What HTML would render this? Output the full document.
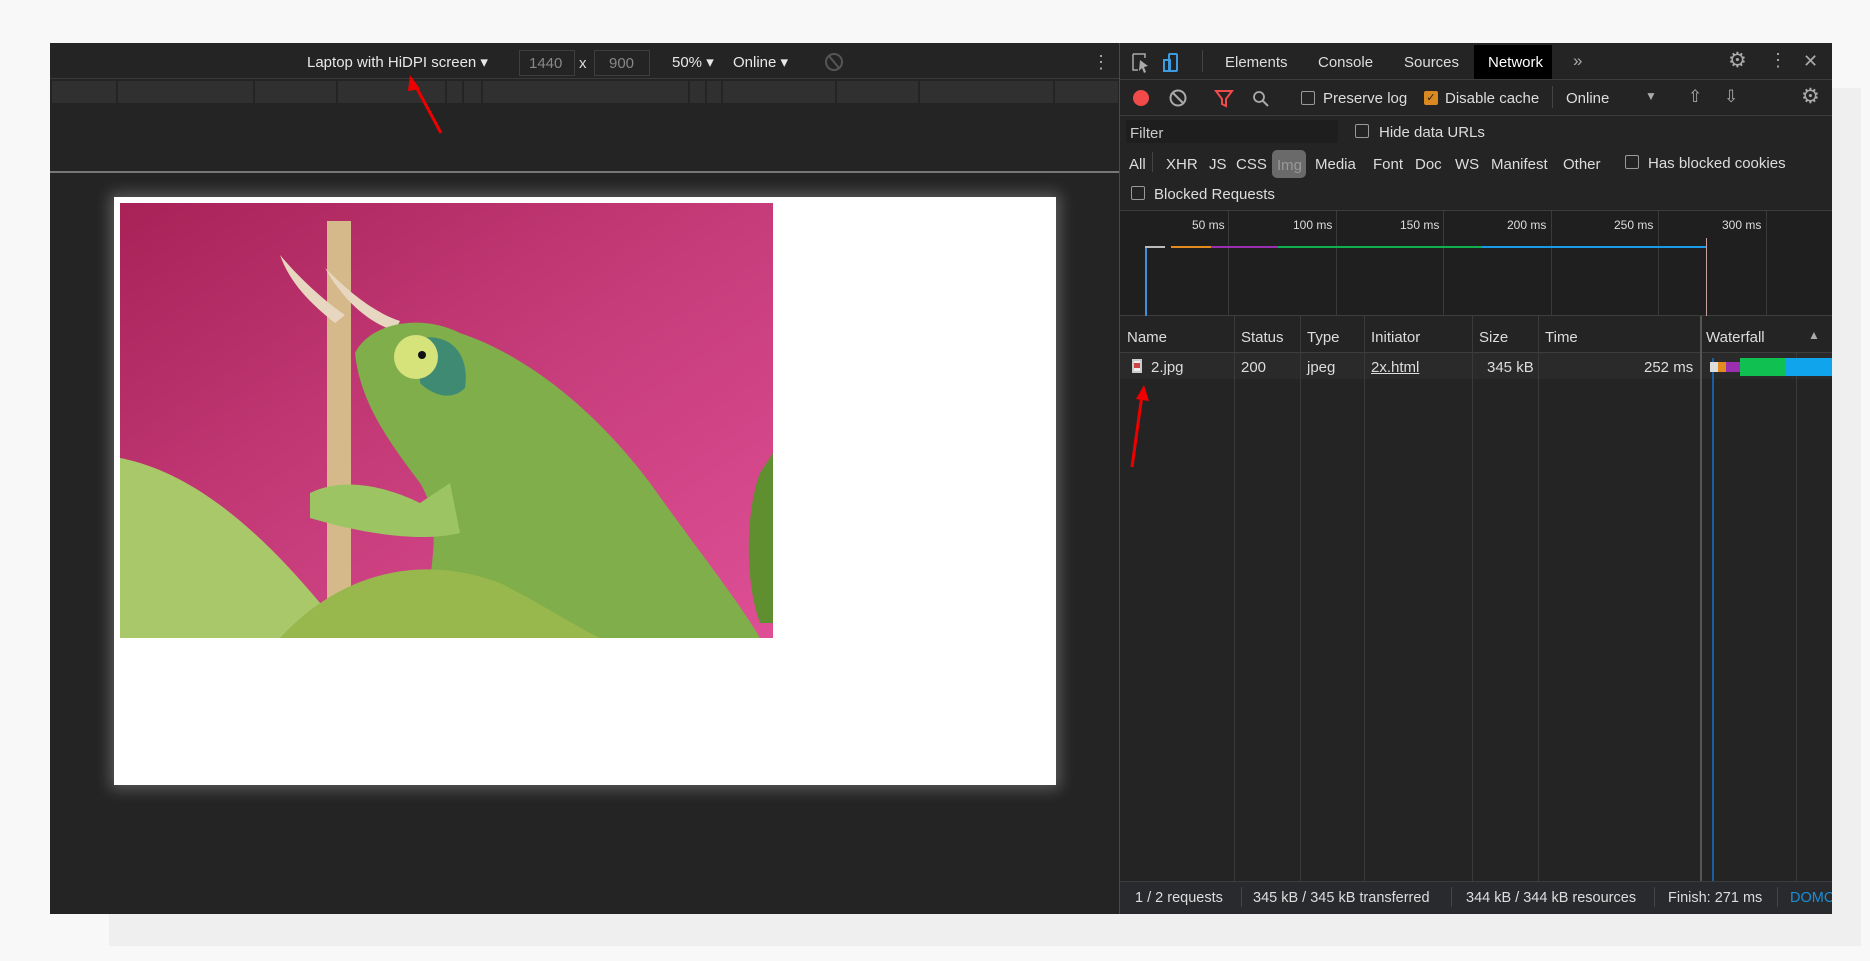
<!DOCTYPE html>
<html><head><meta charset="utf-8"><style>
*{margin:0;padding:0;box-sizing:border-box}
body{width:1870px;height:961px;background:#f8f8f8;position:relative;overflow:hidden;font-family:"Liberation Sans",sans-serif;font-size:15px;color:#ddd}
.a{position:absolute}
.t{position:absolute;white-space:nowrap;line-height:1}
.cb{position:absolute;width:14px;height:14px;border:1px solid #999;border-radius:2px}
.vl{position:absolute;width:1px;background:#3a3a3a}
</style></head><body>
<div class="a" style="left:109px;top:914px;width:1752px;height:32px;background:#efefef"></div>
<div class="a" style="left:1832px;top:88px;width:29px;height:826px;background:#efefef"></div>
<div class="a" style="left:50px;top:43px;width:1782px;height:871px;background:#242424"></div>
<!-- left device toolbar -->
<div class="a" style="left:50px;top:43px;width:1070px;height:36px;background:#242424;border-bottom:1px solid #3a3a3a"></div>
<div class="t" style="left:307px;top:55px;color:#e8e8e8">Laptop with HiDPI screen ▾</div>
<div class="a" style="left:519px;top:50px;width:56px;height:26px;border:1px solid #3e3e3e"></div>
<div class="t" style="left:529px;top:56px;color:#888">1440</div>
<div class="t" style="left:579px;top:56px;color:#ddd">x</div>
<div class="a" style="left:594px;top:50px;width:56px;height:26px;border:1px solid #3e3e3e"></div>
<div class="t" style="left:609px;top:56px;color:#888">900</div>
<div class="t" style="left:672px;top:55px;color:#e8e8e8">50% ▾</div>
<div class="t" style="left:733px;top:55px;color:#e8e8e8">Online ▾</div>
<svg class="a" style="left:824px;top:52px" width="20" height="20"><circle cx="10" cy="10" r="8" stroke="#555" stroke-width="2" fill="none"/><path d="M5 4 L15 16" stroke="#555" stroke-width="2"/></svg>
<div class="t" style="left:1092px;top:53px;color:#aaa;font-size:18px">⋮</div>
<div class="a" style="left:52px;top:81px;width:1066px;height:22px;background:#303030"></div>
<div class="a" style="left:116px;top:81px;width:2px;height:22px;background:#242424"></div>
<div class="a" style="left:253px;top:81px;width:2px;height:22px;background:#242424"></div>
<div class="a" style="left:336px;top:81px;width:2px;height:22px;background:#242424"></div>
<div class="a" style="left:445px;top:81px;width:2px;height:22px;background:#242424"></div>
<div class="a" style="left:462px;top:81px;width:2px;height:22px;background:#242424"></div>
<div class="a" style="left:481px;top:81px;width:2px;height:22px;background:#242424"></div>
<div class="a" style="left:688px;top:81px;width:2px;height:22px;background:#242424"></div>
<div class="a" style="left:705px;top:81px;width:2px;height:22px;background:#242424"></div>
<div class="a" style="left:721px;top:81px;width:2px;height:22px;background:#242424"></div>
<div class="a" style="left:835px;top:81px;width:2px;height:22px;background:#242424"></div>
<div class="a" style="left:918px;top:81px;width:2px;height:22px;background:#242424"></div>
<div class="a" style="left:1053px;top:81px;width:2px;height:22px;background:#242424"></div>
<svg class="a" style="left:398px;top:75px" width="50" height="62"><path d="M43 58 L16 8" stroke="#e00" stroke-width="3"/><path d="M12 0 L22 14 L10 16Z" fill="#e00"/></svg>
<div class="a" style="left:50px;top:171px;width:1070px;height:2px;background:#777"></div>
<!-- page -->
<div class="a" style="left:114px;top:197px;width:942px;height:588px;background:#fff;box-shadow:0 0 14px 4px rgba(255,255,255,.25)"></div>
<svg class="a" style="left:120px;top:203px" width="653" height="435" viewBox="0 0 653 435">
<defs><linearGradient id="g" x1="0" y1="0" x2="1" y2="1"><stop offset="0" stop-color="#a82258"/><stop offset=".5" stop-color="#c63c7a"/><stop offset="1" stop-color="#de4f96"/></linearGradient></defs>
<rect width="653" height="435" fill="url(#g)"/>
<rect x="207" y="18" width="24" height="417" fill="#d6b98a"/>
<path d="M160 52 C170 80 190 100 215 120 L225 112 C200 95 175 70 160 52Z" fill="#e8d7c0"/>
<path d="M205 65 C230 90 255 110 280 118 L275 128 C250 120 225 100 205 65Z" fill="#e8d7c0"/>
<path d="M235 150 C250 120 300 110 340 130 C400 150 470 200 530 280 C580 350 620 400 640 435 L310 435 C300 380 330 330 300 280 C270 240 240 200 235 150Z" fill="#7fae4a"/>
<path d="M300 135 C330 130 350 150 345 185 C330 200 310 190 300 180Z" fill="#3f8a72"/>
<circle cx="296" cy="154" r="22" fill="#d6e27a"/><circle cx="302" cy="152" r="4" fill="#111"/>
<path d="M190 290 C230 270 280 290 300 300 L330 280 L340 330 C300 340 240 330 190 315Z" fill="#9cc463"/>
<path d="M0 255 C80 270 150 340 200 400 L210 435 L0 435Z" fill="#a9c86a"/>
<path d="M160 435 C220 370 300 350 380 380 C420 400 450 420 480 435Z" fill="#98b84d"/>
<path d="M640 270 C625 310 625 380 640 420 L653 420 L653 250Z" fill="#5f8f2e"/>
</svg>
<!-- devtools -->
<div class="a" style="left:1119px;top:43px;width:1px;height:871px;background:#494949"></div>
<div class="a" style="left:1120px;top:43px;width:712px;height:37px;background:#242424;border-bottom:1px solid #3d3d3d"></div>
<svg class="a" style="left:1131px;top:52px" width="50" height="22"><path d="M2 2h12v4M2 2v16h5" stroke="#aaa" fill="none" stroke-width="1.5"/><path d="M9 8l8 6-4 1 2 5-2 1-2-5-3 3z" fill="#aaa"/><rect x="38" y="2" width="8" height="17" rx="1" stroke="#3d9be0" fill="none" stroke-width="2"/><rect x="33" y="8" width="6" height="11" stroke="#3d9be0" fill="none" stroke-width="2"/></svg>
<div class="a" style="left:1202px;top:50px;width:1px;height:22px;background:#444"></div>
<div class="t" style="left:1225px;top:55px">Elements</div>
<div class="t" style="left:1318px;top:55px">Console</div>
<div class="t" style="left:1404px;top:55px">Sources</div>
<div class="a" style="left:1474px;top:45px;width:78px;height:34px;background:#000"></div>
<div class="t" style="left:1488px;top:55px;color:#fff">Network</div>
<div class="t" style="left:1573px;top:52px;color:#aaa;font-size:17px">»</div>
<div class="t" style="left:1728px;top:50px;color:#aaa;font-size:21px">⚙</div>
<div class="t" style="left:1769px;top:51px;color:#aaa;font-size:18px">⋮</div>
<div class="t" style="left:1803px;top:52px;color:#aaa;font-size:18px">✕</div>
<!-- toolbar -->
<div class="a" style="left:1120px;top:80px;width:712px;height:36px;border-bottom:1px solid #3d3d3d"></div>
<div class="a" style="left:1133px;top:90px;width:16px;height:16px;border-radius:50%;background:#f04a4a"></div>
<svg class="a" style="left:1168px;top:88px" width="20" height="20"><circle cx="10" cy="10" r="7.5" stroke="#aaa" stroke-width="2" fill="none"/><path d="M5 5 L15 15" stroke="#aaa" stroke-width="2"/></svg>
<svg class="a" style="left:1214px;top:89px" width="60" height="20"><path d="M2 2h16l-6 8v7l-4-2v-5z" fill="none" stroke="#f04a4a" stroke-width="2"/><circle cx="45" cy="8" r="5" stroke="#aaa" fill="none" stroke-width="1.8"/><path d="M49 12l5 5" stroke="#aaa" stroke-width="2"/></svg>
<div class="cb" style="left:1301px;top:91px"></div>
<div class="t" style="left:1323px;top:91px">Preserve log</div>
<div class="a" style="left:1424px;top:91px;width:14px;height:14px;background:#d9891f;border-radius:2px;color:#222;font-size:11px;text-align:center;line-height:14px">✓</div>
<div class="t" style="left:1445px;top:91px">Disable cache</div>
<div class="a" style="left:1552px;top:86px;width:1px;height:22px;background:#444"></div>
<div class="t" style="left:1566px;top:91px">Online</div>
<div class="t" style="left:1645px;top:90px;color:#aaa;font-size:12px">▼</div>
<div class="t" style="left:1688px;top:88px;color:#aaa;font-size:17px">⇧</div>
<div class="t" style="left:1724px;top:88px;color:#aaa;font-size:17px">⇩</div>
<div class="t" style="left:1801px;top:86px;color:#aaa;font-size:21px">⚙</div>
<!-- filter -->
<div class="a" style="left:1126px;top:120px;width:212px;height:23px;background:#1e1e1e"></div>
<div class="t" style="left:1130px;top:126px;color:#ccc">Filter</div>
<div class="cb" style="left:1355px;top:124px"></div>
<div class="t" style="left:1379px;top:125px">Hide data URLs</div>
<div class="t" style="left:1129px;top:157px">All</div>
<div class="a" style="left:1152px;top:152px;width:1px;height:20px;background:#444"></div>
<div class="t" style="left:1166px;top:157px">XHR</div>
<div class="t" style="left:1209px;top:157px">JS</div>
<div class="t" style="left:1236px;top:157px">CSS</div>
<div class="a" style="left:1272px;top:150px;width:34px;height:28px;background:#6a6a6a;border-radius:5px"></div>
<div class="t" style="left:1277px;top:158px;color:#999">Img</div>
<div class="t" style="left:1315px;top:157px">Media</div>
<div class="t" style="left:1373px;top:157px">Font</div>
<div class="t" style="left:1415px;top:157px">Doc</div>
<div class="t" style="left:1455px;top:157px">WS</div>
<div class="t" style="left:1491px;top:157px">Manifest</div>
<div class="t" style="left:1563px;top:157px">Other</div>
<div class="cb" style="left:1625px;top:155px"></div>
<div class="t" style="left:1648px;top:156px">Has blocked cookies</div>
<div class="cb" style="left:1131px;top:186px"></div>
<div class="t" style="left:1154px;top:187px">Blocked Requests</div>
<!-- overview -->
<div class="a" style="left:1120px;top:210px;width:712px;height:106px;background:#1f1f1f;border-top:1px solid #3d3d3d;border-bottom:1px solid #3d3d3d"></div>
<div class="vl" style="left:1228px;top:211px;height:104px"></div>
<div class="vl" style="left:1336px;top:211px;height:104px"></div>
<div class="vl" style="left:1443px;top:211px;height:104px"></div>
<div class="vl" style="left:1551px;top:211px;height:104px"></div>
<div class="vl" style="left:1658px;top:211px;height:104px"></div>
<div class="vl" style="left:1766px;top:211px;height:104px"></div>
<div class="t" style="left:1192px;top:219px;font-size:12px">50 ms</div>
<div class="t" style="left:1293px;top:219px;font-size:12px">100 ms</div>
<div class="t" style="left:1400px;top:219px;font-size:12px">150 ms</div>
<div class="t" style="left:1507px;top:219px;font-size:12px">200 ms</div>
<div class="t" style="left:1614px;top:219px;font-size:12px">250 ms</div>
<div class="t" style="left:1722px;top:219px;font-size:12px">300 ms</div>
<div class="a" style="left:1145px;top:246px;width:2px;height:70px;background:#3d8fd6"></div>
<div class="a" style="left:1706px;top:238px;width:1px;height:78px;background:#c9a0a0"></div>
<div class="a" style="left:1145px;top:246px;width:20px;height:2px;background:#bbb"></div>
<div class="a" style="left:1171px;top:246px;width:40px;height:2px;background:#e38b1e"></div>
<div class="a" style="left:1211px;top:246px;width:67px;height:2px;background:#9a2fb0"></div>
<div class="a" style="left:1278px;top:246px;width:204px;height:2px;background:#10b050"></div>
<div class="a" style="left:1482px;top:246px;width:224px;height:2px;background:#1a9ae6"></div>
<!-- table -->
<div class="a" style="left:1120px;top:316px;width:712px;height:37px;border-bottom:1px solid #3d3d3d"></div>
<div class="a" style="left:1120px;top:353px;width:712px;height:26px;background:#2a2a2a"></div>
<div class="vl" style="left:1234px;top:316px;height:565px"></div>
<div class="vl" style="left:1300px;top:316px;height:565px"></div>
<div class="vl" style="left:1364px;top:316px;height:565px"></div>
<div class="vl" style="left:1472px;top:316px;height:565px"></div>
<div class="vl" style="left:1538px;top:316px;height:565px"></div>
<div class="a" style="left:1700px;top:316px;width:2px;height:565px;background:#555"></div>
<div class="vl" style="left:1796px;top:353px;height:528px"></div>
<div class="t" style="left:1127px;top:330px">Name</div>
<div class="t" style="left:1241px;top:330px">Status</div>
<div class="t" style="left:1307px;top:330px">Type</div>
<div class="t" style="left:1371px;top:330px">Initiator</div>
<div class="t" style="left:1479px;top:330px">Size</div>
<div class="t" style="left:1545px;top:330px">Time</div>
<div class="t" style="left:1706px;top:330px">Waterfall</div>
<div class="t" style="left:1808px;top:329px;color:#aaa;font-size:12px">▲</div>
<div class="a" style="left:1132px;top:359px;width:10px;height:14px;background:#eee;border:2px solid #ccc"><div style="margin:2px 0;height:5px;background:#c44"></div></div>
<div class="t" style="left:1151px;top:360px">2.jpg</div>
<div class="t" style="left:1241px;top:360px">200</div>
<div class="t" style="left:1307px;top:360px">jpeg</div>
<div class="t" style="left:1371px;top:360px;text-decoration:underline">2x.html</div>
<div class="t" style="left:1487px;top:360px">345 kB</div>
<div class="t" style="left:1644px;top:360px">252 ms</div>
<div class="a" style="left:1712px;top:358px;width:2px;height:523px;background:#1b5ea0"></div>
<div class="a" style="left:1710px;top:362px;width:8px;height:10px;background:#ddd"></div>
<div class="a" style="left:1718px;top:362px;width:8px;height:10px;background:#e38b1e"></div>
<div class="a" style="left:1726px;top:362px;width:14px;height:10px;background:#9a2fb0"></div>
<div class="a" style="left:1740px;top:358px;width:45px;height:18px;background:#10c050"></div>
<div class="a" style="left:1785px;top:358px;width:47px;height:18px;background:#10a4ec"></div>
<svg class="a" style="left:1128px;top:385px" width="30" height="85"><path d="M4 82 L14 10" stroke="#e00" stroke-width="3"/><path d="M16 0 L21 16 L8 14Z" fill="#e00"/></svg>
<!-- footer -->
<div class="a" style="left:1120px;top:881px;width:712px;height:33px;background:#292a2d;border-top:1px solid #3d3d3d"></div>
<div class="t" style="left:1135px;top:891px;font-size:14.5px">1 / 2 requests</div>
<div class="a" style="left:1241px;top:887px;width:1px;height:20px;background:#444"></div>
<div class="t" style="left:1253px;top:891px;font-size:14.5px">345 kB / 345 kB transferred</div>
<div class="a" style="left:1451px;top:887px;width:1px;height:20px;background:#444"></div>
<div class="t" style="left:1466px;top:891px;font-size:14.5px">344 kB / 344 kB resources</div>
<div class="a" style="left:1654px;top:887px;width:1px;height:20px;background:#444"></div>
<div class="t" style="left:1668px;top:891px;font-size:14.5px">Finish: 271 ms</div>
<div class="a" style="left:1777px;top:887px;width:1px;height:20px;background:#444"></div>
<div class="a" style="left:1778px;top:882px;width:54px;height:32px;overflow:hidden"><div class="t" style="left:12px;top:9px;color:#1a8fd6;font-size:14.5px">DOMContentLoaded</div></div>
</body></html>
